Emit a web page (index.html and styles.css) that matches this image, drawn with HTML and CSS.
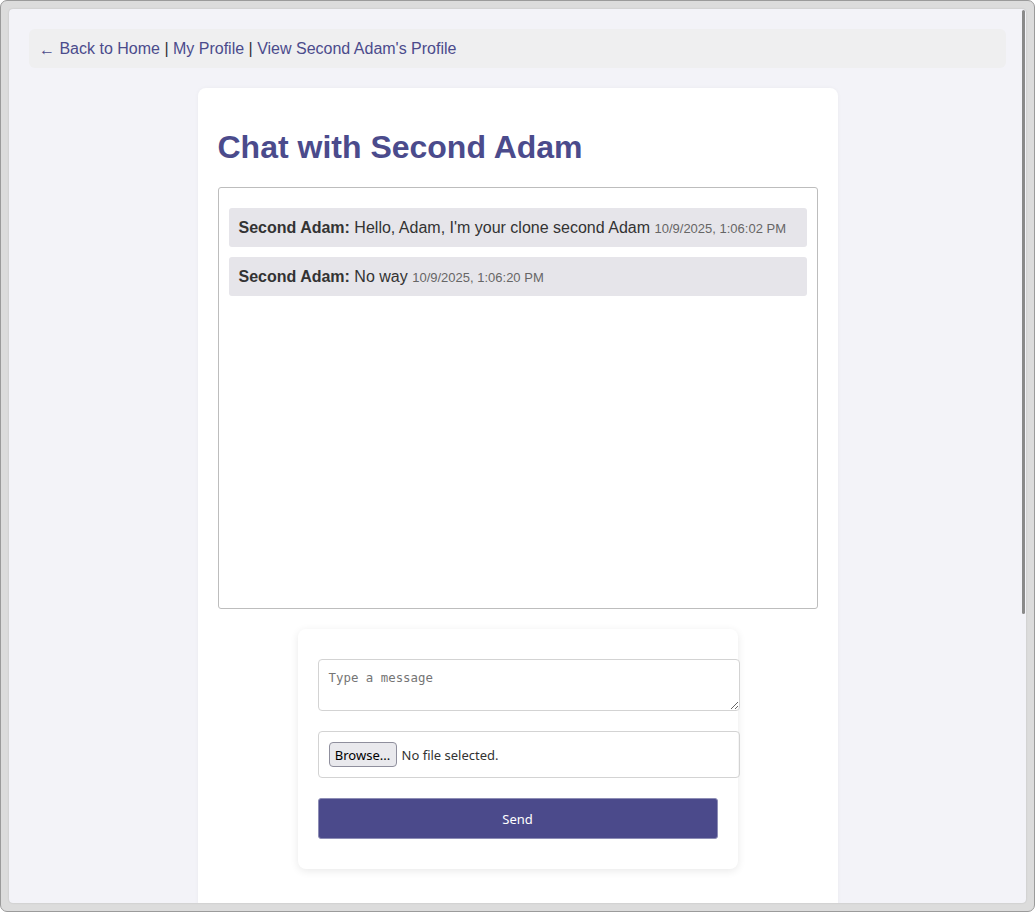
FILE: index.html
```html
<!DOCTYPE html>
<html>
<head>
<meta charset="utf-8">
<title>Chat with Second Adam</title>
<link rel="stylesheet" href="styles.css">
</head>
<body>
<div class="frame">
  <div class="viewport">
    <div class="page">
      <nav class="nav">
        <a class="link" href="#"><span class="arrow">←</span> Back to Home</a> | <a class="link" href="#">My Profile</a> | <a class="link" href="#">View Second Adam's Profile</a>
      </nav>
      <main class="card">
        <h1 class="title">Chat with Second Adam</h1>
        <div class="chat-box">
          <div class="msg"><strong>Second Adam:</strong> Hello, Adam, I'm your clone second Adam <span class="time">10/9/2025, 1:06:02 PM</span></div>
          <div class="msg"><strong>Second Adam:</strong> No way <span class="time">10/9/2025, 1:06:20 PM</span></div>
        </div>
        <form class="form">
          <textarea class="input-text" placeholder="Type a message"></textarea>
          <div class="file-input"><span class="browse">Browse...</span><span class="file-label">No file selected.</span></div>
          <button class="send" type="button">Send</button>
        </form>
      </main>
    </div>
    <div class="scroll-thumb"></div>
  </div>
</div>
</body>
</html>
```
FILE: styles.css
```css
html, body {
  margin: 0;
  padding: 0;
  height: 100%;
}
body {
  background: #ffffff;
}
.frame {
  box-sizing: border-box;
  width: 1035px;
  height: 912px;
  border: 1px solid #9b9b9b;
  border-radius: 7px;
  background: #dcdcdc;
  padding: 8px;
}
.viewport {
  position: relative;
  height: 100%;
  background: #f3f3f8;
  border-radius: 4px;
  overflow: hidden;
  box-shadow: 0 0 2px rgba(0,0,0,0.15);
}
.page {
  padding: 20px;
  font-family: "Liberation Sans", Arial, sans-serif;
  font-size: 16px;
  color: #333;
}
.nav {
  background: #efeff0;
  border-radius: 6px;
  padding: 10px 10px;
  height: 19px;
  line-height: 19px;
}
.link {
  color: #4b4b8c;
  text-decoration: none;
}
.arrow {
  font-size: 16px;
  line-height: 1;
  display: inline-block;
  transform: translateY(1px);
}
.card {
  width: 640px;
  box-sizing: border-box;
  margin: 20px auto 0;
  background: #ffffff;
  border-radius: 8px;
  padding: 20px;
  height: 900px;
  box-shadow: 0 0 4px rgba(0,0,0,0.04);
}
.title {
  color: #4b4b8c;
  font-size: 32px;
  line-height: 37px;
  margin: 21px 0;
}
.chat-box {
  height: 400px;
  border: 1px solid #bdbdbd;
  border-radius: 3px;
  padding: 10px;
  overflow-y: auto;
}
.msg {
  background: #e6e5ea;
  border-radius: 3px;
  padding: 10px;
  margin: 10px 0;
  height: 19px;
  line-height: 19px;
}
.msg strong {
  color: #333;
}
.time {
  font-size: 13px;
  line-height: 1;
  color: #666;
}
.form {
  width: 440px;
  box-sizing: border-box;
  margin: 20px auto 0;
  background: #ffffff;
  border-radius: 8px;
  padding: 30px 20px;
  box-shadow: 0 2px 8px rgba(0,0,0,0.09);
  display: flex;
  flex-direction: column;
  align-items: flex-start;
  gap: 20px;
}
.input-text {
  display: block;
  width: 400px;
  height: 30px;
  padding: 10px;
  margin: 0;
  border: 1px solid #d3d3d3;
  border-radius: 4px;
  font-family: "DejaVu Sans Mono", monospace;
  font-size: 12.4px;
  line-height: 15px;
  color: #333;
  background: #fff;
  resize: vertical;
}
.input-text::placeholder {
  color: #757575;
}
.file-input {
  width: 400px;
  height: 25px;
  padding: 10px;
  border: 1px solid #d3d3d3;
  border-radius: 4px;
  display: flex;
  align-items: center;
  gap: 5px;
  font-family: "Noto Sans", "Open Sans", sans-serif;
  font-size: 13px;
}
.browse {
  box-sizing: border-box;
  height: 25px;
  width: 68px;
  display: flex;
  align-items: center;
  justify-content: center;
  background: #e9e9ed;
  border: 1px solid #8f8f9d;
  border-radius: 4px;
  color: #000;
}
.file-label {
  color: #333;
}
.send {
  width: 400px;
  height: 41px;
  margin: 0;
  background: #4b4a8b;
  color: #ffffff;
  border: 1px solid #8d8db5;
  border-radius: 3px;
  font-family: "Noto Sans", "Open Sans", sans-serif;
  font-size: 13px;
}
.scroll-thumb {
  position: absolute;
  top: 1px;
  right: 1px;
  width: 3px;
  height: 604px;
  background: #8a8a8a;
  border-radius: 2px;
}
```
